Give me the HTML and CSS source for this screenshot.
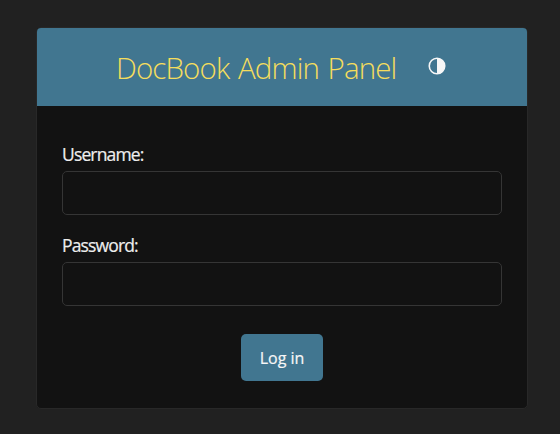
FILE: index.html
```
<!DOCTYPE html>
<html lang="en">
<head>
<meta charset="utf-8">
<title>Log in | DocBook Admin Panel</title>
<link rel="stylesheet" href="styles.css">
</head>
<body>
<main class="card">
  <header class="header">
    <h1 class="title">DocBook Admin Panel</h1>
    <button class="theme-toggle" type="button" aria-label="Toggle theme">
      <svg viewBox="0 0 18 18" width="18" height="18"><circle cx="9" cy="9" r="7.75" fill="none" stroke="currentColor" stroke-width="1.6"/><path d="M9 1.2a7.8 7.8 0 0 1 0 15.6z" fill="currentColor"/></svg>
    </button>
  </header>
  <form class="form">
    <div class="row">
      <label class="label" for="username">Username:</label>
      <input class="input" id="username" type="text">
    </div>
    <div class="row">
      <label class="label" for="password">Password:</label>
      <input class="input" id="password" type="password">
    </div>
    <button class="submit" type="button">Log in</button>
  </form>
</main>
</body>
</html>
```
FILE: styles.css
```
* { box-sizing: border-box; }
body {
  margin: 0;
  padding: 27px 32px 0 36px;
  height: 434px;
  overflow: hidden;
  background: #212121;
  color: #eee;
  font-family: "Open Sans", "Noto Sans", sans-serif;
}
.card {
  width: 492px;
  height: 382px;
  border: 1px solid #282828;
  border-radius: 5px;
  background: #121212;
  overflow: hidden;
}
.header {
  display: flex;
  height: 78px;
  padding: 0 0 0 79px;
  align-items: center;
  background: #417690;
}
.title {
  margin: 2px 0 0;
  width: 312px;
  font-size: 29.5px;
  font-weight: 300;
  line-height: 40px;
  letter-spacing: -0.88px;
  word-spacing: 1.8px;
  white-space: nowrap;
  color: #f5dd5d;
}
.theme-toggle {
  display: flex;
  margin: 0 0 2px;
  padding: 0;
  border: 0;
  background: none;
  color: #f7f7f7;
}
.form {
  display: flex;
  flex-direction: column;
  padding: 36px 25px 0;
}
.row {
  display: flex;
  flex-direction: column;
  height: 91px;
}
.label {
  height: 29px;
  font-size: 17.5px;
  line-height: 24px;
  letter-spacing: -0.85px;
  -webkit-text-stroke: 0.2px #eee;
}
.input {
  width: 440px;
  height: 44px;
  padding: 8px;
  border: 1px solid #353535;
  border-radius: 5px;
  background: #121212;
  color: #eee;
}
.submit {
  align-self: center;
  width: 82px;
  height: 47px;
  margin-top: 10px;
  padding: 1px 0 0;
  border: 0;
  border-radius: 5px;
  background: #417690;
  color: #f7f7f7;
  font: 400 16px/24px "Open Sans", "Noto Sans", sans-serif;
  -webkit-text-stroke: 0.2px #f7f7f7;
}
```
